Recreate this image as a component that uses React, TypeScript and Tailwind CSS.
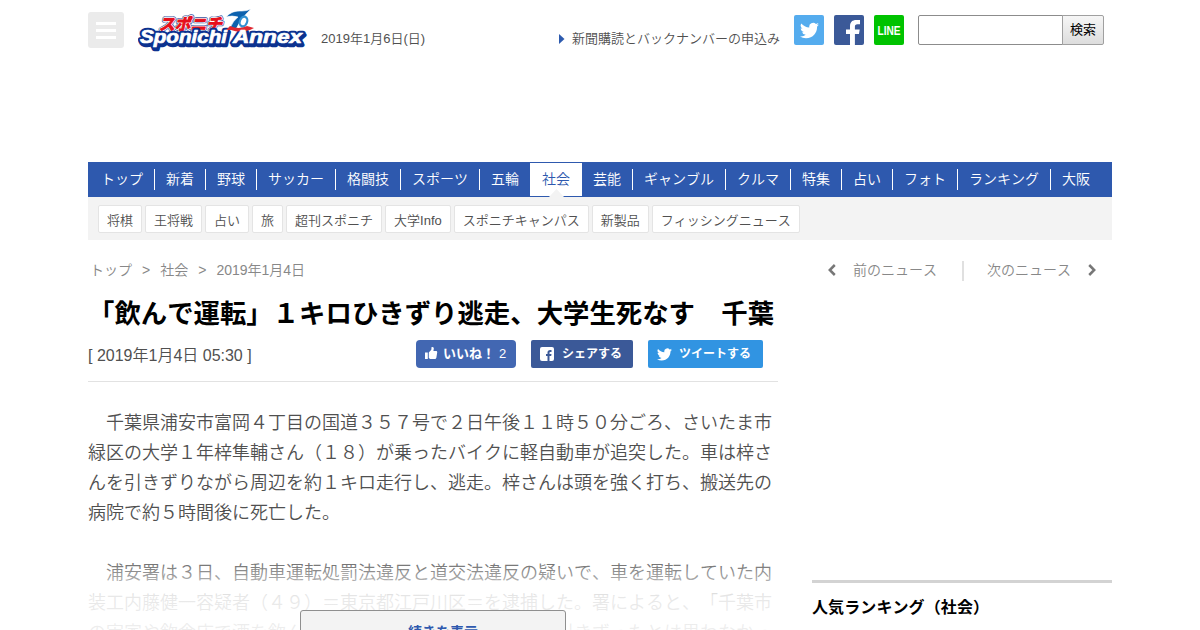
import clsx from "clsx";

const NAV = ["トップ", "新着", "野球", "サッカー", "格闘技", "スポーツ", "五輪", "社会", "芸能", "ギャンブル", "クルマ", "特集", "占い", "フォト", "ランキング", "大阪"];

const SUB_NAV = ["将棋", "王将戦", "占い", "旅", "超刊スポニチ", "大学Info", "スポニチキャンパス", "新製品", "フィッシングニュース"];

const TWITTER_PATH =
  "M23.95 4.57a10 10 0 0 1-2.82.78 4.96 4.96 0 0 0 2.16-2.73c-.95.56-2 .96-3.13 1.19a4.92 4.92 0 0 0-8.38 4.48C7.69 8.1 4.07 6.13 1.64 3.16a4.92 4.92 0 0 0 1.52 6.57 4.9 4.9 0 0 1-2.23-.61v.06c0 2.38 1.7 4.37 3.95 4.83a5 5 0 0 1-2.21.08 4.94 4.94 0 0 0 4.6 3.42A9.87 9.87 0 0 1 0 19.54a13.99 13.99 0 0 0 7.55 2.21c9.05 0 14-7.5 14-13.98 0-.21 0-.42-.02-.63a9.94 9.94 0 0 0 2.42-2.57z";

function TwitterIcon({ className }: { className: string }) {
  return (
    <svg viewBox="0 0 24 24" className={className} fill="currentColor">
      <path d={TWITTER_PATH} />
    </svg>
  );
}

function Logo() {
  return (
    <svg width="172" height="44" viewBox="0 0 172 44" className="ml-[14px] mt-[8px] shrink-0">
      <g fontFamily="'Noto Sans CJK JP', sans-serif" fontWeight="700" fontSize="16" strokeLinejoin="round">
        <g transform="translate(21 21.5) skewX(-12)">
          <text textLength="63" lengthAdjust="spacingAndGlyphs" fill="#3a559f" stroke="#3a559f" strokeWidth="3.8">スポニチ</text>
          <text textLength="63" lengthAdjust="spacingAndGlyphs" fill="#fff" stroke="#fff" strokeWidth="2.4">スポニチ</text>
          <text textLength="63" lengthAdjust="spacingAndGlyphs" fill="#e60f1c" stroke="#e60f1c" strokeWidth="1">スポニチ</text>
        </g>
      </g>
      <g fontFamily="'Liberation Sans', sans-serif" fontWeight="700" fontStyle="italic" fontSize="18" strokeLinejoin="round">
        <g fill="#0c328f" stroke="#0c328f" strokeWidth="4.5">
          <text x="3" y="37" textLength="87" lengthAdjust="spacingAndGlyphs">Sponichi</text>
          <text x="96" y="37" textLength="69" lengthAdjust="spacingAndGlyphs">Annex</text>
          <text x="2" y="35" textLength="87" lengthAdjust="spacingAndGlyphs">Sponichi</text>
          <text x="95" y="35" textLength="69" lengthAdjust="spacingAndGlyphs">Annex</text>
        </g>
        <path d="M88 9 Q94 2 104 3 Q109 3 113 1 Q103 10 98 21 L92 20 Q95 13 100 9 Q94 7 88 9Z" fill="#0d62ae" stroke="#fff" strokeWidth=".6" />
        <ellipse cx="105.5" cy="13.5" rx="3.6" ry="5" transform="rotate(22 105.5 13.5)" fill="#fff" stroke="#3291d2" strokeWidth="2.2" />
        <path d="M92 18 Q101 22 109 18 L116 20 L112 22 Q102 25 93 22 L88 22Z" fill="#df2730" />
        <g fill="#fff" stroke="#fff" strokeWidth=".7">
          <text x="2" y="35" textLength="87" lengthAdjust="spacingAndGlyphs">Sponichi</text>
          <text x="95" y="35" textLength="69" lengthAdjust="spacingAndGlyphs">Annex</text>
        </g>
      </g>
    </svg>
  );
}

function Header() {
  return (
    <header className="flex h-[162px] items-start">
      <button className="mt-3 flex size-9 shrink-0 flex-col items-center justify-center gap-1 rounded-[3px] bg-[#ebebeb]">
        <span className="h-[3px] w-5 bg-white" />
        <span className="h-[3px] w-5 bg-white" />
        <span className="h-[3px] w-5 bg-white" />
      </button>
      <Logo />
      <p className="ml-[11px] mt-[29px] w-[238px] text-[13px] leading-5">2019年1月6日(日)</p>
      <a className="flex items-center pt-[29px] text-[13px] leading-5 whitespace-nowrap">
        <svg width="6" height="10" viewBox="0 0 6 10" className="mr-[7px]">
          <path d="M0 0 L5.5 5 L0 10Z" fill="#2d5aae" />
        </svg>
        新聞購読とバックナンバーの申込み
      </a>
      <div className="ml-auto flex shrink-0 gap-[10px] pt-[15px] text-white">
        <a className="flex size-[30px] items-center justify-center rounded-[2px] bg-[#55acee]">
          <TwitterIcon className="size-[19px]" />
        </a>
        <a className="size-[30px] overflow-hidden rounded-[2px] bg-[#3b5998]">
          <svg viewBox="0 0 30 30" className="size-[30px]">
            <path d="M16 30V19h-4v-4.5h4v-3.2C16 7 18.5 5 22.2 5H26v4.3h-2.5c-2 0-2.6 1-2.6 2.4v2.8h4.8L25 19h-4.1v11z" fill="#fff" />
          </svg>
        </a>
        <a className="flex size-[30px] items-center justify-center rounded-[2px] bg-[#00c300]">
          <svg viewBox="0 0 30 30" className="size-[30px]">
            <text x="3.5" y="19.5" textLength="23" lengthAdjust="spacingAndGlyphs" fontSize="12" fontWeight="700" fontFamily="'Liberation Sans', sans-serif" fill="#fff">LINE</text>
          </svg>
        </a>
      </div>
      <form className="ml-[14px] mr-2 flex pt-[15px]">
        <input className="h-[30px] w-[145px] rounded-l-[2px] border border-[#8c8c8c] bg-white" />
        <button type="button" className="-ml-px h-[30px] w-[42px] rounded-r-[2px] border border-[#a0a0a0] bg-linear-to-b from-[#f6f6f6] to-[#dddddd] text-[13px] font-normal text-black">
          検索
        </button>
      </form>
    </header>
  );
}

function GlobalNav() {
  return (
    <nav className="[font-kerning:none]">
      <ul className="flex h-[35px] bg-[#2e59ae] py-px pl-[2px] text-sm text-white">
        {NAV.map((label, i) => {
          const active = label === "社会";
          return (
            <li key={label} className={clsx("relative flex h-[33px] items-center", active && "-ml-px bg-white pl-px text-[#2e59ae]")}>
              <a
                className={clsx(
                  "h-[21px] px-[11px] leading-[20px] whitespace-nowrap",
                  i < NAV.length - 1 && "border-r border-white"
                )}
              >
                {label}
              </a>
              {active && (
                <svg width="15" height="8" viewBox="0 0 15 8" className="absolute -bottom-px left-[19px]">
                  <path d="M7.5 0 L15 8 H0Z" fill="#f3f3f3" />
                </svg>
              )}
            </li>
          );
        })}
      </ul>
      <ul className="flex h-[43px] gap-[3px] bg-[#f3f3f3] pl-[10px] pt-2">
        {SUB_NAV.map((label) => (
          <li key={label} className="h-7 rounded-[2px] border border-[#e4e4e4] bg-white px-2 text-[13px] leading-[29px] whitespace-nowrap">
            {label}
          </li>
        ))}
      </ul>
    </nav>
  );
}

function ShareButtons() {
  return (
    <div className="flex gap-[15px] pr-[15px] text-white">
      <a className="flex h-7 w-[100px] items-center rounded-[4px] bg-[#4267b2] pl-2 text-[13px] whitespace-nowrap">
        <svg viewBox="0 0 14 14" className="mr-[5px] size-[14px] -translate-y-px" fill="#fff">
          <path d="M1 6.5h2.8V13H1zM4.8 6.5 7.3 3.8 7.6 1h.8c1.1 0 1.5.8 1.4 1.8L9.4 5H12c1 0 1.3.7 1.2 1.5l-.8 5c-.1.9-.7 1.5-1.6 1.5H6.2l-1.4-.9z" />
        </svg>
        <span className="font-bold">いいね！</span>
        <span className="ml-[4px]">2</span>
      </a>
      <a className="flex h-7 w-[102px] items-center rounded-[2px] bg-[#3b5998] pl-[9px] text-xs font-bold whitespace-nowrap">
        <svg viewBox="0 0 14 14" className="mr-2 size-[14px]">
          <rect width="14" height="14" rx="2" fill="#fff" />
          <path d="M7.5 14V9H6V7h1.5V5.6c0-1.8 1-2.7 2.6-2.7h1.4v2h-1c-.8 0-1 .3-1 1V7h2l-.3 2H9.5v5z" fill="#3b5998" />
        </svg>
        シェアする
      </a>
      <a className="flex h-7 w-[115px] items-center rounded-[2px] bg-[#3194e2] pl-[9px] text-xs font-bold whitespace-nowrap">
        <TwitterIcon className="mr-[7px] size-[15px]" />
        ツイートする
      </a>
    </div>
  );
}

function Article() {
  return (
    <main className="w-[690px]">
      <p className="flex gap-[10px] pl-[2px] pt-[20px] text-sm leading-5 text-[#888]">
        <span>トップ</span>
        <span>&gt;</span>
        <span>社会</span>
        <span>&gt;</span>
        <span>2019年1月4日</span>
      </p>
      <h1 className="mt-[14px] text-[26.4px] leading-10 font-bold whitespace-nowrap text-black [font-kerning:none]">
        「飲んで運転」１キロひきずり逃走、大学生死なす　千葉
      </h1>
      <div className="flex h-[48px] justify-between border-b border-[#e2e2e2] pt-[6px]">
        <p className="pt-[4px] text-base leading-6">[ 2019年1月4日 05:30 ]</p>
        <ShareButtons />
      </div>
      <div className="relative h-[248px] overflow-hidden pt-[26px] text-lg leading-[30px] whitespace-nowrap [font-kerning:none]">
        <p className="indent-[18px]">
          千葉県浦安市富岡４丁目の国道３５７号で２日午後１１時５０分ごろ、さいたま市
          <br />
          緑区の大学１年梓隼輔さん（１８）が乗ったバイクに軽自動車が追突した。車は梓さ
          <br />
          んを引きずりながら周辺を約１キロ走行し、逃走。梓さんは頭を強く打ち、搬送先の
          <br />
          病院で約５時間後に死亡した。
        </p>
        <p className="mt-[30px] indent-[18px]">
          浦安署は３日、自動車運転処罰法違反と道交法違反の疑いで、車を運転していた内
          <br />
          装工内藤健一容疑者（４９）＝東京都江戸川区＝を逮捕した。署によると、「千葉市
          <br />
          の実家や飲食店で酒を飲んだあとに車を運転したが、人を引きずったとは思わなかっ
        </p>
        <div className="absolute inset-x-0 bottom-0 h-[80px] bg-linear-to-b from-white/0 from-5% via-white/87 via-58% to-white/90" />
        <button className="absolute left-[212px] top-[228px] h-[44px] w-[266px] rounded-[3px] border border-[#8f8f8f] bg-[#f3f3f3] pl-5 text-sm font-bold text-[#2e59ae]">
          続きを表示
        </button>
      </div>
    </main>
  );
}

function Sidebar() {
  return (
    <aside className="w-[300px] [font-kerning:none]">
      <div className="flex h-[340px] items-start px-4 pt-[20px] text-sm leading-5 text-[#888]">
        <a className="flex items-center">
          <svg width="8" height="12" viewBox="0 0 8 12" className="mr-[17px]" fill="none" stroke="#777" strokeWidth="2.5">
            <path d="M6.8 1 L1.8 6 L6.8 11" />
          </svg>
          前のニュース
        </a>
        <span className="mt-px ml-[25px] h-5 w-[2px] bg-[#e0e0e0]" />
        <a className="ml-auto flex items-center">
          次のニュース
          <svg width="8" height="12" viewBox="0 0 8 12" className="ml-[17px]" fill="none" stroke="#777" strokeWidth="2.5">
            <path d="M1.2 1 L6.2 6 L1.2 11" />
          </svg>
        </a>
      </div>
      <h2 className="border-t-[3px] border-[#d3d3d3] pt-[13px] text-base leading-6 font-bold tracking-[0.1px] text-black">人気ランキング（社会）</h2>
    </aside>
  );
}

export default function App() {
  return (
    <div className="h-[630px] overflow-hidden bg-white font-['Liberation_Sans','Noto_Sans_CJK_JP',sans-serif] font-[350] text-[#505050] [text-spacing-trim:space-all]">
      <div className="mx-auto w-[1024px]">
        <Header />
        <GlobalNav />
        <div className="flex justify-between">
          <Article />
          <Sidebar />
        </div>
      </div>
    </div>
  );
}
